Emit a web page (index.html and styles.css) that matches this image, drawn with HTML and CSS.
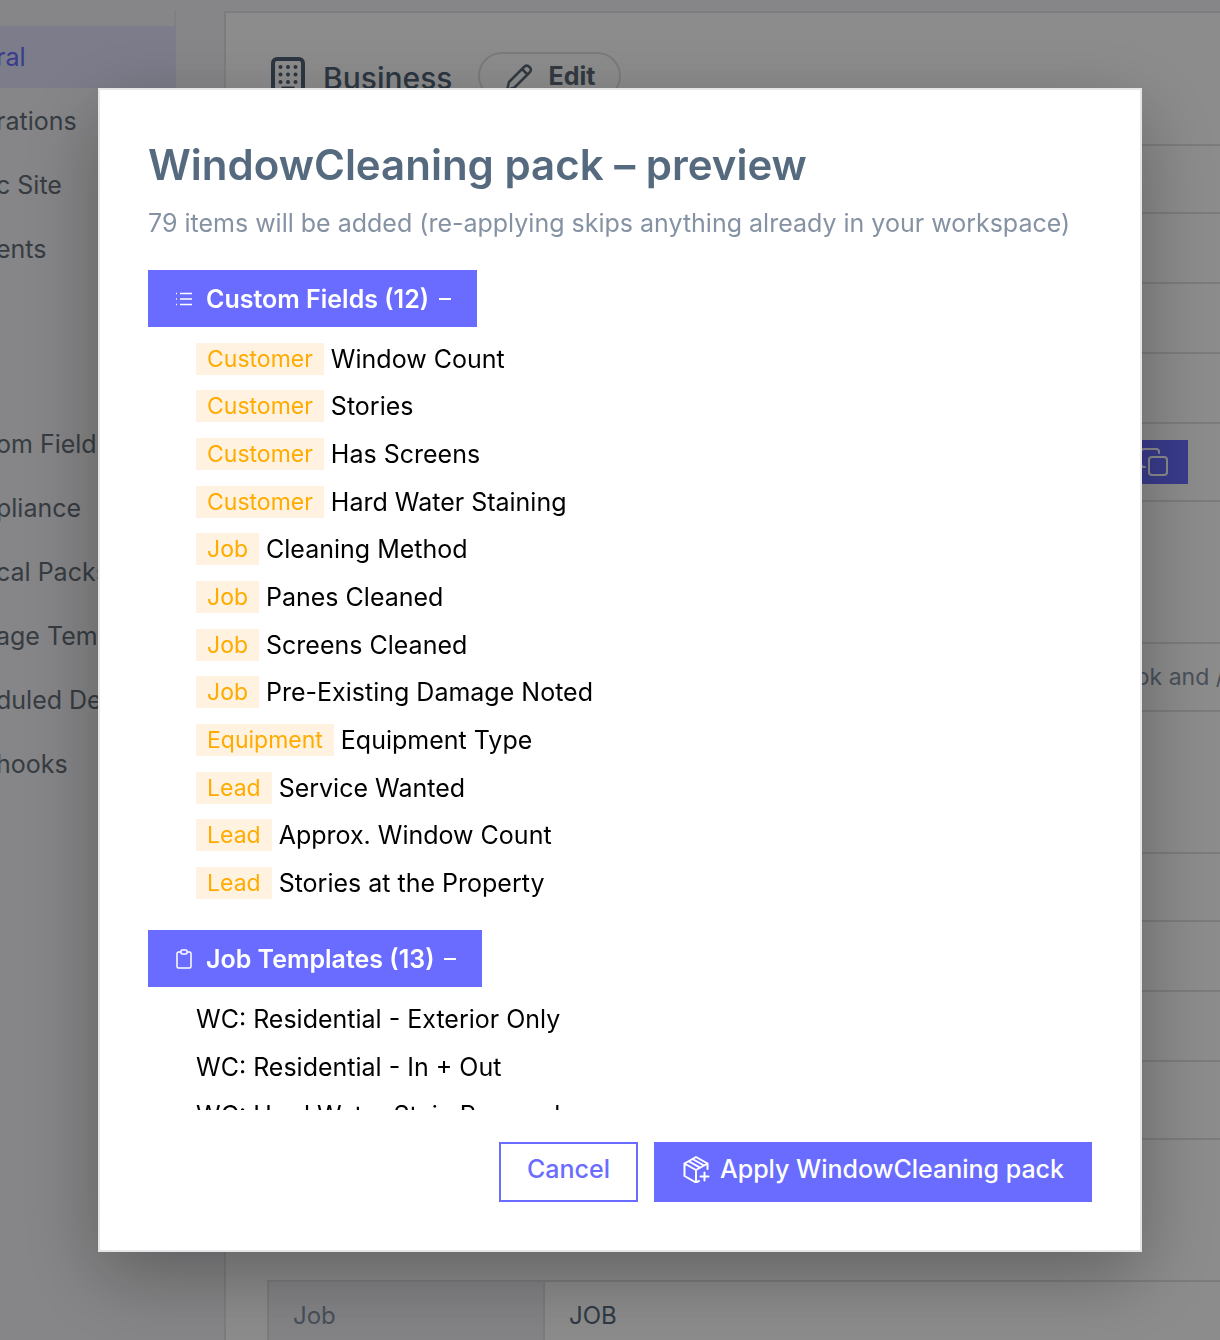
FILE: index.html
```
<!DOCTYPE html>
<html lang="en">
<head>
  <meta charset="UTF-8">
  <meta name="viewport" content="width=device-width, initial-scale=1.0">
  <title>WindowCleaning pack</title>
  <link rel="stylesheet" href="styles.css">
</head>
<body>
    <div class="page">
        <nav class="sidebar">
            <a href="#" class="active">ral</a>
            <a href="#">rations</a>
            <a href="#">c Site</a>
            <a href="#">ents</a>
            <div class="nav-gap"></div>
            <a href="#">om Fields</a>
            <a href="#">pliance</a>
            <a href="#">cal Packs</a>
            <a href="#">age Tem</a>
            <a href="#">duled De</a>
            <a href="#">hooks</a>
        </nav>

        <main class="panel">
            <header class="panel-header">
                <svg class="building" viewBox="0 0 34 44" fill="none" stroke="currentColor" stroke-width="4">
                    <rect x="2" y="2" width="30" height="40" rx="4"/>
                    <path d="M12 42V31h10v11" stroke-width="3"/>
                    <g fill="currentColor" stroke="none">
                        <circle cx="9.500" cy="10" r="2"/><circle cx="17" cy="10" r="2"/><circle cx="24.500" cy="10" r="2"/>
                        <circle cx="9.500" cy="17.500" r="2"/><circle cx="17" cy="17.500" r="2"/><circle cx="24.500" cy="17.500" r="2"/>
                        <circle cx="9.500" cy="25" r="2"/><circle cx="17" cy="25" r="2"/><circle cx="24.500" cy="25" r="2"/>
                    </g>
                </svg>
                <h2>Business</h2>
                <button type="button" class="edit">
                    <svg viewBox="0 0 30 30" fill="none" stroke="currentColor" stroke-width="2.500" stroke-linejoin="round">
                        <path d="M3 29l2-8L20.500 5.500q2.500-2 5 .5t.5 5L10.500 26.500zM18 8l6 6"/>
                    </svg>
                    Edit
                </button>
            </header>

            <section class="rows">
                <div class="row"></div>
                <div class="row"></div>
                <div class="row"></div>
                <div class="row"></div>
                <div class="row tall">
                    <button type="button" class="copy" aria-label="Copy">
                        <svg viewBox="0 0 28 28" fill="none" stroke="currentColor" stroke-width="2" stroke-linecap="round" stroke-linejoin="round">
                            <rect x="9" y="9" width="18" height="18" rx="3"/>
                            <path d="M5 19H4a3 3 0 0 1-3-3V4a3 3 0 0 1 3-3h12a3 3 0 0 1 3 3v1"/>
                        </svg>
                    </button>
                </div>
            </section>

            <section class="rows">
                <div class="row"><span>ok and /</span></div>
            </section>

            <section class="rows">
                <div class="row"></div>
                <div class="row"></div>
                <div class="row"></div>
                <div class="row tall"></div>
            </section>

            <table class="prefixes">
                <tr>
                    <th>Job</th>
                    <td>JOB</td>
                </tr>
            </table>
        </main>
    </div>

    <div class="overlay">
        <div class="modal" role="dialog" aria-labelledby="modal-title">
            <h1 id="modal-title">WindowCleaning pack – preview</h1>
            <p class="subtitle">79 items will be added (re-applying skips anything already in your workspace)</p>

            <div class="preview">
                <button type="button" class="group">
                    <svg viewBox="0 0 20 20" fill="none" stroke="currentColor" stroke-width="1.500">
                        <path d="M6 4.500h12M6 10h12M6 15.500h12"/>
                        <path d="M2 4.500h1M2 10h1M2 15.500h1"/>
                    </svg>
                    <span>Custom Fields (12)</span>
                    <i class="minus"></i>
                </button>
                <ul class="fields">
                    <li><span class="badge">Customer</span>Window Count</li>
                    <li><span class="badge">Customer</span>Stories</li>
                    <li><span class="badge">Customer</span>Has Screens</li>
                    <li><span class="badge">Customer</span>Hard Water Staining</li>
                    <li><span class="badge">Job</span>Cleaning Method</li>
                    <li><span class="badge">Job</span>Panes Cleaned</li>
                    <li><span class="badge">Job</span>Screens Cleaned</li>
                    <li><span class="badge">Job</span>Pre-Existing Damage Noted</li>
                    <li><span class="badge">Equipment</span>Equipment Type</li>
                    <li><span class="badge">Lead</span>Service Wanted</li>
                    <li><span class="badge">Lead</span>Approx. Window Count</li>
                    <li><span class="badge">Lead</span>Stories at the Property</li>
                </ul>

                <button type="button" class="group">
                    <svg viewBox="0 0 20 20" fill="none" stroke="currentColor" stroke-width="1.500" stroke-linejoin="round">
                        <path d="M7 3H4.500A1.500 1.500 0 0 0 3 4.500v13A1.500 1.500 0 0 0 4.500 19h11a1.500 1.500 0 0 0 1.500-1.500v-13A1.500 1.500 0 0 0 15.500 3H13"/>
                        <rect x="7" y="1" width="6" height="4" rx="1"/>
                    </svg>
                    <span>Job Templates (13)</span>
                    <i class="minus"></i>
                </button>
                <ul>
                    <li>WC: Residential - Exterior Only</li>
                    <li>WC: Residential - In + Out</li>
                    <li>WC: Hard Water Stain Removal</li>
                </ul>
            </div>

            <div class="actions">
                <button type="button" class="cancel">Cancel</button>
                <button type="button" class="apply">
                    <svg viewBox="0 0 28 28" fill="none" stroke="currentColor" stroke-width="2" stroke-linecap="round" stroke-linejoin="round">
                        <path d="M17 26l-3 1.500L2.500 21V8.500L14 2l11.500 6.500V14M2.500 8.500L14 15l11.500-6.500M14 15v12.500M10.500 4l11.500 6.500M6.500 6.200L18 12.700M22.500 17.500v8M18.500 21.500h8"/>
                    </svg>
                    Apply WindowCleaning pack
                </button>
            </div>
        </div>
    </div>
</body>
</html>
```
FILE: styles.css
```
* {
  box-sizing: border-box;
}
body {
  margin: 0;
  height: 100vh;
  overflow: hidden;
  font-family: Inter, 'Liberation Sans', sans-serif;
  font-size: 25px;
  color: #000;
  background: #f4f4f7;
}
button {
  font: inherit;
  cursor: pointer;
}
svg {
  flex: none;
}
.page {
  display: flex;
  align-items: flex-start;
  gap: 48px;
  height: 100vh;
  overflow: hidden;
}
.sidebar {
  flex: none;
  width: 176px;
  margin-top: 10px;
  padding-top: 16px;
  background: linear-gradient(#e9e9ed, #e9e9ed) right top / 2px 16px no-repeat;
}
.sidebar a {
  display: block;
  height: 62px;
  margin-bottom: 2px;
  line-height: 62px;
  text-indent: -4px;
  color: #646e78;
  text-decoration: none;
  white-space: nowrap;
}
.sidebar a.active {
  color: #696cff;
  background: #e2e2fb;
}
.nav-gap {
  height: 131px;
}
.panel {
  flex: 1;
  margin-top: 11px;
  padding-left: 41px;
  background: #fff;
  border: solid #e4e4e8;
  border-width: 2px 0 0 2px;
}
.panel-header {
  display: flex;
  align-items: flex-start;
  height: 131px;
  padding: 39px 0 0 4px;
  color: #506478;
}
.building {
  width: 34px;
  height: 44px;
  margin-top: 5px;
}
.panel-header h2 {
  margin: 6px 26px 0 18px;
  font-size: 30px;
  line-height: 40px;
  font-weight: 500;
}
.edit {
  display: flex;
  align-items: center;
  gap: 14px;
  height: 48px;
  padding: 0 24px;
  font-weight: 700;
  color: #5c6a78;
  background: none;
  border: 2px solid #e0e0e4;
  border-radius: 24px;
}
.edit svg {
  width: 30px;
  height: 30px;
}
.rows {
  margin-bottom: 140px;
  border-bottom: 2px solid #e2e2e6;
}
.row {
  display: flex;
  align-items: center;
  justify-content: flex-end;
  height: 70px;
  border-top: 2px solid #e2e2e6;
}
.row:first-child {
  height: 68px;
}
.row.tall {
  height: 78px;
  padding-right: 32px;
}
.row span {
  margin-right: -4px;
  font-size: 23px;
  color: #8592a3;
}
.copy {
  display: flex;
  align-items: center;
  justify-content: flex-end;
  width: 68px;
  height: 44px;
  padding: 0 20px;
  color: #fff;
  background: #696cff;
  border: 0;
}
.copy svg {
  width: 28px;
  height: 28px;
}
.prefixes {
  width: 100%;
  border-collapse: collapse;
  border: solid #e2e2e6;
  border-width: 2px 0 2px 2px;
}
.prefixes th,
.prefixes td {
  height: 68px;
  padding: 0 24px;
  text-align: left;
  font-size: 24px;
  font-weight: 400;
}
.prefixes th {
  width: 276px;
  color: #8592a3;
  background: #f0f0f4;
  border-right: 2px solid #e2e2e6;
}
.prefixes td {
  color: #566a7f;
}
.overlay {
  position: fixed;
  inset: 0;
  display: flex;
  padding: 88px 78px 88px 98px;
  background: rgba(0, 0, 0, 0.45);
}
.modal {
  flex: 1;
  display: flex;
  flex-direction: column;
  min-width: 0;
  padding: 48px;
  background: #fff;
  border: 2px solid #e6e6e9;
  box-shadow: 0 24px 72px rgba(0, 0, 0, 0.3);
}
.modal h1 {
  margin: 0;
  font-size: 42px;
  line-height: 54px;
  font-weight: 600;
  color: #566a7f;
  white-space: nowrap;
}
.subtitle {
  margin: 14px 0 30px;
  line-height: 34px;
  color: #8592a3;
  white-space: nowrap;
}
.preview {
  flex: 1;
  min-height: 0;
  overflow: hidden;
}
.group {
  display: flex;
  align-items: center;
  height: 57px;
  padding: 0 26px;
  font-weight: 600;
  color: #fff;
  background: #696cff;
  border: 0;
}
.group svg {
  width: 20px;
  height: 20px;
  margin-right: 12px;
}
.minus {
  width: 12px;
  height: 2px;
  margin-left: 10px;
  background: #fff;
}
.preview ul {
  margin: 8px 0 23px;
  padding-left: 48px;
  list-style-type: none;
}
.preview li {
  display: flex;
  align-items: center;
  height: 48px;
  white-space: nowrap;
}
.preview .fields {
  display: grid;
  grid-auto-rows: 1fr;
  height: 572px;
}
.preview .fields li {
  height: auto;
}
.badge {
  margin-right: 7px;
  padding: 0 11px;
  font-size: 23px;
  line-height: 32px;
  color: #ffab00;
  background: #fff2e0;
}
.actions {
  display: flex;
  justify-content: flex-end;
  gap: 16px;
  padding-top: 32px;
}
.actions button {
  display: flex;
  align-items: center;
  height: 60px;
  padding: 0 26px 6px;
  font-weight: 500;
  border: 2px solid #696cff;
}
.cancel {
  color: #696cff;
  background: #fff;
}
.apply {
  gap: 10px;
  color: #fff;
  background: #696cff;
}
.apply svg {
  width: 28px;
  height: 28px;
}
```
